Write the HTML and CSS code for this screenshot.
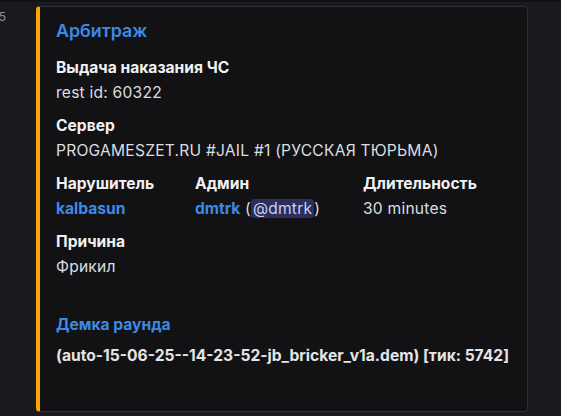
FILE: index.html
```html
<!DOCTYPE html>
<html lang="ru">
<head>
<meta charset="utf-8">
<link rel="stylesheet" href="styles.css">
</head>
<body>
<div class="row">
  <div class="gutter"><span class="ts">14:35</span></div>
  <article class="embed">
    <div class="title">Арбитраж</div>
    <div class="fields">
      <div class="field full">
        <div class="fname">Выдача наказания ЧС</div>
        <div class="fval">rest id: 60322</div>
      </div>
      <div class="field full">
        <div class="fname">Сервер</div>
        <div class="fval">PROGAMESZET.RU #JAIL #1 (РУССКАЯ ТЮРЬМА)</div>
      </div>
      <div class="field">
        <div class="fname">Нарушитель</div>
        <div class="fval"><span class="link">kalbasun</span></div>
      </div>
      <div class="field">
        <div class="fname">Админ</div>
        <div class="fval"><span class="link">dmtrk</span> (<span class="mention">@dmtrk</span>)</div>
      </div>
      <div class="field">
        <div class="fname">Длительность</div>
        <div class="fval">30 minutes</div>
      </div>
      <div class="field full">
        <div class="fname">Причина</div>
        <div class="fval">Фрикил</div>
      </div>
      <div class="field full">
        <div class="fname empty">&#8203;</div>
        <div class="fval"><span class="link">Демка раунда</span></div>
        <div class="fval demo">(auto-15-06-25--14-23-52-jb_bricker_v1a.dem) [тик: 5742]</div>
      </div>
    </div>
  </article>
</div>
</body>
</html>
```
FILE: styles.css
```css
html, body {
  margin: 0;
  padding: 0;
  background: #1a1a1e;
  height: 100%;
  overflow: hidden;
}
body {
  border-top: 2px solid #111113;
  box-sizing: border-box;
  font-family: Inter, "Noto Sans", sans-serif;
  color: #dbdee1;
}
.row {
  display: flex;
  align-items: flex-start;
  padding-top: 4px;
}
.gutter {
  width: 6px;
  margin-right: 30px;
  overflow: hidden;
  display: flex;
  justify-content: flex-end;
  padding-top: 4px;
}
.ts {
  white-space: nowrap;
  font-size: 12px;
  line-height: 14px;
  color: #8c919a;
}
.embed {
  box-sizing: border-box;
  width: 492px;
  height: 406px;
  background: #121214;
  border: 1px solid #2e2e34;
  border-left: 4px solid #ffa500;
  border-radius: 4px;
  padding: 12px 16px 16px 16px;
}
.title {
  font-size: 17.8px;
  line-height: 24px;
  font-weight: 600;
  color: #3c8ae6;
}
.fields {
  display: grid;
  grid-template-columns: 139px 168px 1fr;
  row-gap: 10px;
  margin-top: 14px;
}
.field.full {
  grid-column: 1 / -1;
}
.fname {
  font-size: 15.6px;
  line-height: 22px;
  font-weight: 700;
  color: #f0f1f3;
  margin-bottom: 2px;
}
.fval {
  font-size: 15.6px;
  line-height: 24px;
  color: #dbdee1;
  white-space: nowrap;
  letter-spacing: 0.22px;
}
.link {
  color: #3c8ae6;
  font-weight: 700;
  letter-spacing: 0;
}
.mention {
  background: #2a2f5c;
  color: #c9cdfb;
  border-radius: 3px;
  padding: 0 2px;
}
.demo {
  margin-top: 7px;
  font-weight: 700;
  color: #e3e5e8;
  letter-spacing: 0;
}
```
